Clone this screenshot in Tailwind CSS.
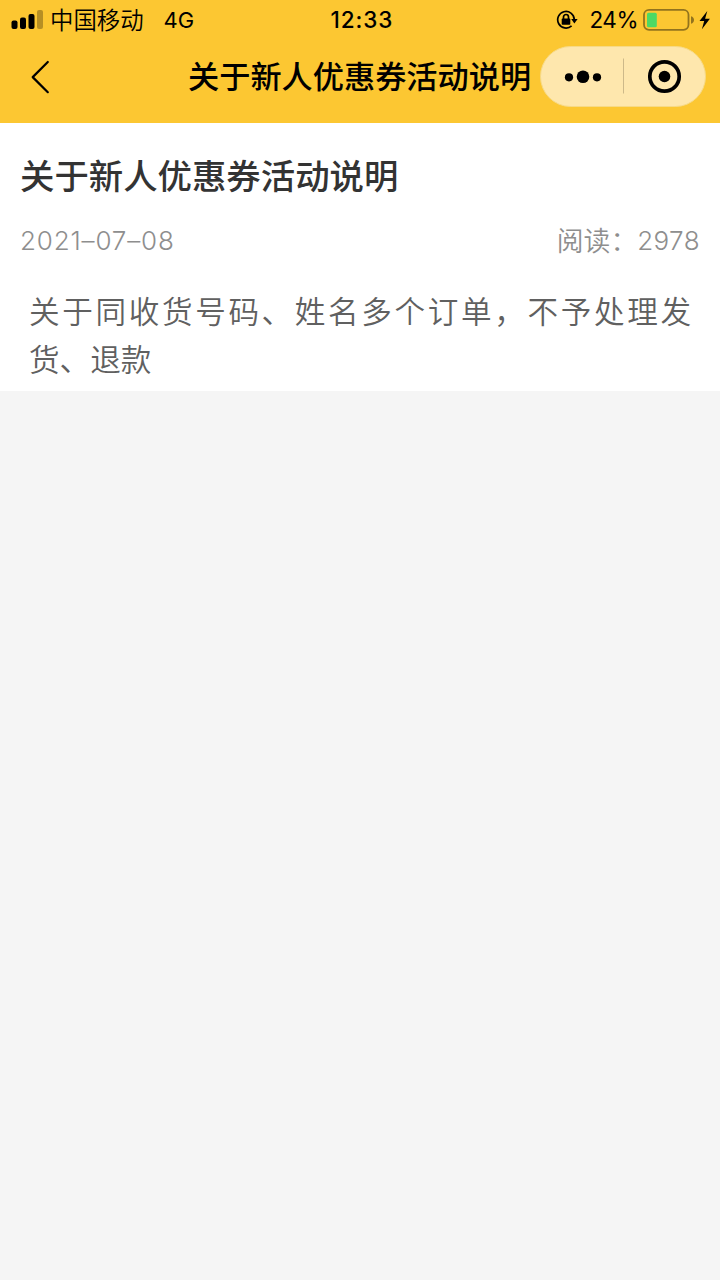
<!DOCTYPE html>
<html lang="zh-CN">
<head>
<meta charset="utf-8">
<title>关于新人优惠券活动说明</title>
<script src="https://cdn.jsdelivr.net/npm/@tailwindcss/browser@4"></script>
</head>
<body class="min-h-screen bg-[#f5f5f5] font-['Inter','Noto_Sans_CJK_SC',sans-serif]">
<header class="h-[123px] bg-[#fcc732] text-black">
  <div class="grid h-10 grid-cols-3 items-center pl-[11px] pr-[9px] text-[23px] leading-10">
    <div class="flex h-10 items-center">
      <svg class="mr-[7px] h-5 w-8 shrink-0" viewBox="0 0 32 20"><rect x="0.5" y="10.5" width="6" height="8.5" rx="2"/><rect x="9" y="7.5" width="6" height="11.5" rx="2"/><rect x="17.5" y="4" width="6" height="15" rx="2"/><rect x="26" y="0" width="6" height="19" rx="2" opacity=".28"/></svg>
      <span class="whitespace-nowrap pt-px text-[23.4px] font-[350]">中国移动</span>
      <span class="ml-5 text-[22px]">4G</span>
    </div>
    <div class="h-10 pl-[2px] text-center text-[22.5px] font-[550] tracking-[0.9px]">12:33</div>
    <div class="flex h-10 items-center justify-end">
      <svg class="mr-[11px] h-5 w-[23px] shrink-0" viewBox="0 0 23 20" fill="none" stroke="#000" stroke-width="1.7"><path d="M16.6 15.9A8.3 8.3 0 1 1 19.3 9.5"/><path d="M16.2 9h6.4l-3.2 4.4z" fill="#000" stroke="none"/><rect x="6.7" y="8.6" width="8.6" height="6.2" rx=".8" fill="#000" stroke="none"/><path d="M8.5 9V7a2.5 2.5 0 0 1 5 0v2"/></svg>
      <span class="mr-[5px] text-[22.5px] tracking-[-0.5px]">24%</span>
      <svg class="h-6 w-[68px] shrink-0" viewBox="0 0 68 24"><rect x="1" y="1.8" width="44.5" height="20" rx="5" fill="none" stroke="#000" stroke-opacity=".42" stroke-width="1.8"/><rect x="4" y="4.7" width="9.8" height="14.6" rx="1.5" fill="#4cd964"/><path d="M48 8.2q3 1 3 3.8t-3 3.8z" opacity=".42"/><path d="M64.3 3 56.5 13h4.7l-2.3 8.2 8-10.5h-4.8z"/></svg>
    </div>
  </div>
  <div class="flex h-[73px] items-center pr-[14px]">
    <svg class="ml-[30px] h-9 w-5 shrink-0" viewBox="0 0 20 36" fill="none" stroke="#000" stroke-width="2.2" stroke-linecap="round" stroke-linejoin="round"><path d="M17.8 3 2.7 18.1l15.1 15.1"/></svg>
    <h1 class="ml-[138px] whitespace-nowrap pt-[2px] text-[31.2px] font-medium leading-[71px]">关于新人优惠券活动说明</h1>
    <div class="ml-auto flex h-[61px] w-[166px] shrink-0 items-center rounded-full border border-[#f7da86] bg-[#fee7ad]">
      <svg class="h-[59px] w-[164px]" viewBox="0 0 164 59"><circle cx="28" cy="30.3" r="4.1"/><circle cx="42" cy="29.8" r="6.3"/><circle cx="56" cy="30.3" r="4.1"/><path d="M82.5 11.5v35" stroke="#cdb989"/><circle cx="123.5" cy="29.5" r="14.7" fill="none" stroke="#000" stroke-width="3.7"/><circle cx="123.5" cy="29.5" r="5.8"/></svg>
    </div>
  </div>
</header>
<main class="h-[268px] bg-white px-5 pt-[29px]">
  <h2 class="text-[34.4px] font-medium leading-[50px] text-[#333]">关于新人优惠券活动说明</h2>
  <div class="mt-[19px] flex justify-between text-[26px] leading-10 text-[#8e8e8e]">
    <time class="font-light tracking-[0.85px]">2021–07–08</time>
    <span class="flex font-light"><span class="text-[26.8px] font-[350]">阅读：</span><span class="tracking-[0.4px]">2978</span></span>
  </div>
  <p class="mt-[27px] px-[9px] text-justify text-[30.6px] font-[350] leading-12 text-[#606060]">关于同收货号码、姓名多个订单，不予处理发货、退款</p>
</main>
</body>
</html>
